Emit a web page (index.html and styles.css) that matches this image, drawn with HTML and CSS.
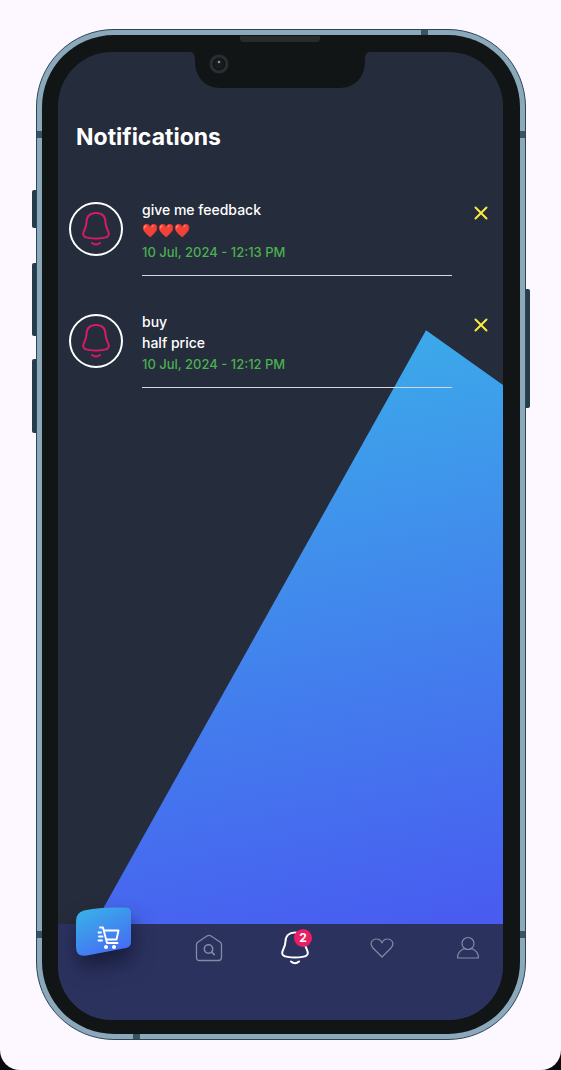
FILE: index.html
```html
<!DOCTYPE html>
<html lang="en">
<head>
<meta charset="utf-8">
<meta name="viewport" content="width=device-width, initial-scale=1">
<title>Notifications</title>
<link rel="stylesheet" href="styles.css">
</head>
<body>
<div class="page">
  <div class="device">
    <span class="key key-mute"></span>
    <span class="key key-up"></span>
    <span class="key key-down"></span>
    <span class="key key-power"></span>
    <span class="band band-top"></span>
    <span class="band band-bottom"></span>
    <span class="band band-side band-left-high"></span>
    <span class="band band-side band-left-low"></span>
    <span class="band band-side band-right-high"></span>
    <span class="band band-side band-right-low"></span>
    <div class="bezel">
      <span class="speaker"></span>
      <div class="screen">
        <svg class="notch" width="180" height="36" viewBox="0 0 180 36" aria-hidden="true">
          <path d="M0 0C4 0 5 3 5 9C5 25 15 36 31 36H149C165 36 175 25 175 9C175 3 176 0 180 0Z" fill="#111516"/>
          <circle cx="29" cy="12" r="8" fill="#111516" stroke="#2b2e30" stroke-width="3"/>
          <circle cx="29" cy="12" r="5" fill="#171b1f"/>
          <circle cx="29" cy="10" r="1.3" fill="#8a9296"/>
        </svg>
        <main class="content">
          <h1 class="title">Notifications</h1>
          <ul class="list">
            <li class="item">
              <span class="avatar">
                <svg width="28" height="34" viewBox="0 0 28 34" fill="none" stroke="#d81b66" stroke-width="2" stroke-linecap="round" aria-hidden="true"><path d="M14 1C8 1 4.500 4.500 4.500 10.500C4.300 14 3.500 16 2.200 18.500C-.5 24 1.500 26.500 14 26.500S28.500 24 25.800 18.500C24.500 16 23.700 14 23.500 10.500C23.500 4.500 20 1 14 1Z"/><path d="M10 31Q14 34 18 31"/></svg>
              </span>
              <div class="text">
                <p>give me feedback</p>
                <p class="hearts">❤️❤️❤️</p>
                <time class="date" datetime="2024-07-10T12:13">10 Jul, 2024 - 12:13 PM</time>
              </div>
              <button class="close" type="button" aria-label="Dismiss give me feedback">
                <svg width="14" height="14" viewBox="0 0 14 14" fill="none" stroke="#ffeb3b" stroke-width="2" stroke-linecap="round"><path d="M1.500 1.500L12.500 12.500M12.500 1.500L1.500 12.500"/></svg>
              </button>
            </li>
            <li class="item">
              <span class="avatar">
                <svg width="28" height="34" viewBox="0 0 28 34" fill="none" stroke="#d81b66" stroke-width="2" stroke-linecap="round" aria-hidden="true"><path d="M14 1C8 1 4.500 4.500 4.500 10.500C4.300 14 3.500 16 2.200 18.500C-.5 24 1.500 26.500 14 26.500S28.500 24 25.800 18.500C24.500 16 23.700 14 23.500 10.500C23.500 4.500 20 1 14 1Z"/><path d="M10 31Q14 34 18 31"/></svg>
              </span>
              <div class="text">
                <p>buy</p>
                <p>half price</p>
                <time class="date" datetime="2024-07-10T12:12">10 Jul, 2024 - 12:12 PM</time>
              </div>
              <button class="close" type="button" aria-label="Dismiss buy">
                <svg width="14" height="14" viewBox="0 0 14 14" fill="none" stroke="#ffeb3b" stroke-width="2" stroke-linecap="round"><path d="M1.500 1.500L12.500 12.500M12.500 1.500L1.500 12.500"/></svg>
              </button>
            </li>
          </ul>
        </main>
        <nav class="tabs">
          <button class="tab tab-cart" type="button" aria-label="Cart">
            <svg class="cart" width="56" height="50" viewBox="0 0 56 50" aria-hidden="true">
              <defs><linearGradient id="cartFill" x1="0.2" y1="0" x2="0.8" y2="1"><stop offset="0" stop-color="#39b0e8"/><stop offset="1" stop-color="#4668f4"/></linearGradient></defs>
              <path d="M9 3.500C20 1 32 .5 50 .5Q56 .5 56 5.500V35Q56 40 51 41L12 48.500Q1 50.500 1 40V14Q1 5.500 9 3.500Z" fill="url(#cartFill)"/>
              <g fill="none" stroke="#fff" stroke-width="1.900" stroke-linecap="round" stroke-linejoin="round"><path d="M25 20.500H28L32 36H42.500M28.800 23.500H43.500L41.500 32.500H31M23.500 25.500H26M24 29.500H27.500M23.500 33.500H27"/></g>
              <circle cx="31" cy="40" r="2" fill="#fff"/><circle cx="39" cy="40" r="2" fill="#fff"/>
            </svg>
          </button>
          <button class="tab" type="button" aria-label="Home">
            <svg width="28" height="28" viewBox="0 0 28 28" fill="none" stroke="#858aa5" stroke-width="1.300" stroke-linecap="round" stroke-linejoin="round"><path d="M1.500 10.500Q1.500 9 3 8L12 2Q14 .8 16 2L25 8Q26.500 9 26.500 10.500V23.500Q26.500 26.500 23.500 26.500H4.500Q1.500 26.500 1.500 23.500Z"/><circle cx="13.500" cy="15" r="4.200" stroke-width="1.600"/><path d="M16.700 18.200L19.300 20.700" stroke-width="1.600"/></svg>
          </button>
          <button class="tab" type="button" aria-label="Notifications, 2 new">
            <svg width="28" height="34" viewBox="0 0 28 34" fill="none" stroke="#fff" stroke-width="2" stroke-linecap="round"><path d="M14 1.500C8 1.500 4.500 5 4.500 10.500C4.300 14 3.500 16 2.200 18.500C-.5 24 1.500 26.500 14 26.500S28.500 24 25.800 18.500C24.500 16 23.700 14 23.500 10.500C23.500 5 20 1.500 14 1.500Z"/><path d="M10 30.500Q14 34 18 30.500"/></svg>
            <span class="badge">2</span>
          </button>
          <button class="tab" type="button" aria-label="Favourites">
            <svg width="24" height="20" viewBox="0 0 24 20" fill="none" stroke="#858aa5" stroke-width="1.200" stroke-linejoin="round"><path d="M12 19L3 10C-1.500 5 3 .7 6.500 1C9.500 1 11.200 2.800 12 5C12.800 2.800 14.500 1 17.500 1C21 .7 25.500 5 21 10Z"/></svg>
          </button>
          <button class="tab" type="button" aria-label="Profile">
            <svg width="24" height="24" viewBox="0 0 24 24" fill="none" stroke="#858aa5" stroke-width="1.200" stroke-linejoin="round"><circle cx="12" cy="7.500" r="6"/><path d="M8.500 12.500C4.500 14 1.500 17.500 1.500 22H22.500C22.500 17.500 19.500 14 15.500 12.500Q12 14.500 8.500 12.500Z"/></svg>
          </button>
        </nav>
      </div>
    </div>
  </div>
</div>
</body>
</html>
```
FILE: styles.css
```css
* { box-sizing: border-box; }

body {
  margin: 0;
  background: #0b090d;
  font-family: "Inter", "Open Sans", sans-serif;
  color: #fff;
}

.page {
  display: flex;
  min-height: 100vh;
  padding: 29px 35px 30px 36px;
  border-radius: 0 0 20px 20px;
  background: #fdf7ff;
}

.device {
  position: relative;
  display: flex;
  flex: 1;
  padding: 5px;
  border: 1px solid #2c4658;
  border-radius: 78px;
  background: #8ba9ba;
}

.key {
  position: absolute;
  left: -5px;
  width: 4px;
  border-radius: 2px 0 0 2px;
  background: #273c4a;
}

.key-mute { top: 160px; height: 38px; }
.key-up { top: 233px; height: 73px; }
.key-down { top: 329px; height: 74px; }

.key-power {
  top: 259px;
  right: -5px;
  left: auto;
  height: 119px;
  border-radius: 0 2px 2px 0;
}

.band {
  position: absolute;
  width: 7px;
  height: 6px;
  background: #3d5260;
}

.band-side { width: 6px; height: 7px; }
.band-top { top: 0; right: 97px; }
.band-bottom { bottom: 0; left: 96px; }
.band-left-high { top: 101px; left: 0; }
.band-left-low { bottom: 101px; left: 0; }
.band-right-high { top: 101px; right: 0; }
.band-right-low { bottom: 101px; right: 0; }

.bezel {
  position: relative;
  display: flex;
  flex: 1;
  padding: 17px 17px 14px 16px;
  border-radius: 72px;
  background: #111516;
}

.speaker {
  position: absolute;
  top: 1px;
  left: 50%;
  width: 80px;
  height: 6px;
  margin-left: -41px;
  border-radius: 0 0 4px 4px;
  background: #262b2c;
}

.screen {
  position: relative;
  display: flex;
  flex: 1;
  flex-direction: column;
  overflow: hidden;
  border-radius: 54px;
  background: #252c3b;
}

.notch {
  position: absolute;
  top: 0;
  left: 50%;
  margin-left: -91px;
}

.content {
  position: relative;
  z-index: 0;
  flex: 1;
  padding: 68px 14px 32px 11px;
}

.content::before {
  content: "";
  position: absolute;
  z-index: -1;
  inset: 0;
  clip-path: polygon(82.7% 31.9%, 100% 38.2%, 100% 100%, 8.2% 100%);
  background: linear-gradient(168deg, #3ab4e9 28%, #485df0 98%);
}

.title {
  margin: 0 0 45px;
  padding-left: 7px;
  font-size: 23px;
  line-height: 34px;
  font-weight: 700;
}

.list {
  display: flex;
  flex-direction: column;
  gap: 35px;
  margin: 0;
  padding: 0;
  list-style: none;
}

.item {
  display: flex;
  align-items: flex-start;
}

.avatar {
  display: flex;
  align-items: center;
  justify-content: center;
  width: 54px;
  height: 54px;
  margin: 3px 19px 0 0;
  border: 2px solid #fff;
  border-radius: 50%;
}

.avatar svg { display: block; }

.text {
  flex: 1;
  height: 77px;
  border-bottom: 1px solid #d3d7df;
  font-size: 14px;
  line-height: 21px;
  font-weight: 500;
}

.text p { margin: 0; }

.text .hearts { font-size: 13px; }

.date {
  display: block;
  margin-top: 1px;
  color: #4caf50;
  font-size: 13px;
}

.close {
  width: 16px;
  height: 16px;
  margin: 6px 0 0 21px;
  padding: 1px;
  border: 0;
  background: none;
}

.close svg, .tab svg { display: block; }

.tabs {
  position: relative;
  z-index: 1;
  display: flex;
  align-items: center;
  justify-content: space-between;
  height: 96px;
  padding: 0 21px 48px 17px;
  background: #2b325e;
}

.tab {
  position: relative;
  display: flex;
  justify-content: center;
  width: 28px;
  padding: 0;
  border: 0;
  background: none;
}

.tab-cart {
  width: 56px;
  margin: -16px 5px 16px 0;
}

.cart { filter: drop-shadow(2px 12px 10px rgb(14 17 45 / 0.65)); }

.badge {
  position: absolute;
  top: -2px;
  right: -3px;
  width: 18px;
  height: 18px;
  border-radius: 50%;
  background: #e91e63;
  color: #fff;
  font: 700 12px/18px "Inter", sans-serif;
  text-align: center;
}
```
